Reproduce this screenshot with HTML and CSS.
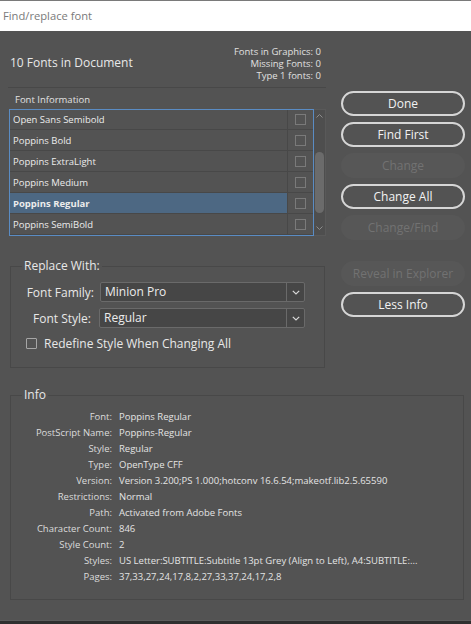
FILE: index.html
```html
<!DOCTYPE html>
<html>
<head>
<meta charset="utf-8">
<title>Find/replace font</title>
<link rel="stylesheet" href="styles.css">
</head>
<body>
<div class="titlebar">Find/replace font</div>
<div class="dialog">
  <div class="top">
    <div class="left">
      <div class="header">
        <div class="count">10 Fonts in Document</div>
        <div class="stats">
          <div>Fonts in Graphics: 0</div>
          <div>Missing Fonts: 0</div>
          <div>Type 1 fonts: 0</div>
        </div>
      </div>
      <div class="list-label">Font Information</div>
      <div class="list-wrap">
        <div class="list">
          <div class="row first"><span class="name">Open Sans Semibold</span><span class="chk"><span class="box"></span></span></div>
          <div class="row"><span class="name">Poppins Bold</span><span class="chk"><span class="box"></span></span></div>
          <div class="row"><span class="name">Poppins ExtraLight</span><span class="chk"><span class="box"></span></span></div>
          <div class="row"><span class="name">Poppins Medium</span><span class="chk"><span class="box"></span></span></div>
          <div class="row sel"><span class="name">Poppins Regular</span><span class="chk"><span class="box"></span></span></div>
          <div class="row"><span class="name">Poppins SemiBold</span><span class="chk"><span class="box"></span></span></div>
        </div>
        <div class="scroll">
          <div class="arrow up"><svg width="7" height="4" viewBox="0 0 7 4"><path d="M0.5 3.5 L3.5 0.5 L6.5 3.5" fill="none" stroke="#8c8c8c" stroke-width="1"/></svg></div>
          <div class="thumb"></div>
          <div class="track-rest"></div>
          <div class="arrow down"><svg width="7" height="4" viewBox="0 0 7 4"><path d="M0.5 0.5 L3.5 3.5 L6.5 0.5" fill="none" stroke="#8c8c8c" stroke-width="1"/></svg></div>
        </div>
      </div>
      <fieldset class="group replace">
        <legend>Replace With:</legend>
        <div class="field">
          <span class="field-label">Font Family:</span>
          <div class="select family"><span class="select-text">Minion Pro</span><span class="select-btn"><svg width="8" height="5" viewBox="0 0 8 5"><path d="M0.8 0.8 L4 4 L7.2 0.8" fill="none" stroke="#d8d8d8" stroke-width="1.2"/></svg></span></div>
        </div>
        <div class="field second">
          <span class="field-label style-label">Font Style:</span>
          <div class="select style"><span class="select-text">Regular</span><span class="select-btn"><svg width="8" height="5" viewBox="0 0 8 5"><path d="M0.8 0.8 L4 4 L7.2 0.8" fill="none" stroke="#d8d8d8" stroke-width="1.2"/></svg></span></div>
        </div>
        <div class="check-row"><span class="cbox"></span><span class="check-label">Redefine Style When Changing All</span></div>
      </fieldset>
    </div>
    <div class="buttons">
      <div class="btn">Done</div>
      <div class="btn">Find First</div>
      <div class="btn disabled">Change</div>
      <div class="btn">Change All</div>
      <div class="btn disabled">Change/Find</div>
      <div class="btn disabled spaced">Reveal in Explorer</div>
      <div class="btn">Less Info</div>
    </div>
  </div>
  <fieldset class="group info">
    <legend>Info</legend>
    <div class="info-grid">
      <span class="k">Font:</span><span class="v">Poppins Regular</span>
      <span class="k">PostScript Name:</span><span class="v">Poppins-Regular</span>
      <span class="k">Style:</span><span class="v">Regular</span>
      <span class="k">Type:</span><span class="v">OpenType CFF</span>
      <span class="k">Version:</span><span class="v">Version 3.200;PS 1.000;hotconv 16.6.54;makeotf.lib2.5.65590</span>
      <span class="k">Restrictions:</span><span class="v">Normal</span>
      <span class="k">Path:</span><span class="v">Activated from Adobe Fonts</span>
      <span class="k">Character Count:</span><span class="v">846</span>
      <span class="k">Style Count:</span><span class="v">2</span>
      <span class="k">Styles:</span><span class="v">US Letter:SUBTITLE:Subtitle 13pt Grey (Align to Left), A4:SUBTITLE:...</span>
      <span class="k">Pages:</span><span class="v">37,33,27,24,17,8,2,27,33,37,24,17,2,8</span>
    </div>
  </fieldset>
</div>
</body>
</html>
```
FILE: styles.css
```css
html, body {
  margin: 0;
  padding: 0;
}
body {
  width: 471px;
  height: 624px;
  overflow: hidden;
  background: #2f2f2f;
  font-family: "Open Sans", "Noto Sans", sans-serif;
  color: #e4e4e4;
}
.titlebar {
  box-sizing: border-box;
  height: 31px;
  border-top: 1px solid #7a7a7a;
  background: #ffffff;
  color: #7a7a7a;
  font-size: 11.2px;
  line-height: 29px;
  padding-left: 3px;
}
.dialog {
  height: 590px;
  background: #535353;
  border-bottom: 1px solid #5c5c5c;
  box-sizing: border-box;
}
.top {
  display: flex;
  padding-left: 9px;
}
.left {
  width: 317px;
}
.header {
  height: 56px;
  margin-left: -1px;
  display: flex;
  justify-content: space-between;
  border-bottom: 1px solid #484848;
}
.count {
  font-size: 12px;
  line-height: 16px;
  padding-top: 24px;
  padding-left: 2px;
  color: #e8e8e8;
}
.stats {
  padding-top: 15px;
  padding-right: 5px;
  text-align: right;
  font-size: 9.5px;
  line-height: 12px;
  color: #e0e0e0;
}
.list-label {
  box-sizing: border-box;
  height: 21px;
  line-height: 21px;
  padding-top: 1px;
  font-size: 9.5px;
  padding-left: 6px;
  color: #e2e2e2;
}
.list-wrap {
  display: flex;
  height: 127px;
}
.list {
  box-sizing: border-box;
  width: 305px;
  height: 127px;
  border: 1px solid #5a8cc4;
  overflow: hidden;
}
.row {
  display: flex;
  height: 20px;
  border-bottom: 1px solid #484848;
}
.row.first {
  height: 19px;
}
.name {
  box-sizing: border-box;
  flex: 1;
  padding-left: 3px;
  padding-top: 2px;
  font-size: 9.5px;
  line-height: 18px;
  color: #ececec;
}
.row.first .name {
  padding-top: 1px;
}
.row.sel .name {
  background: #4d6883;
  font-weight: 700;
}
.chk {
  box-sizing: border-box;
  width: 26px;
  border-left: 1px solid #484848;
  display: flex;
  align-items: center;
  justify-content: center;
}
.box {
  box-sizing: border-box;
  width: 11px;
  height: 11px;
  border: 1px solid #7a7a7a;
}
.scroll {
  box-sizing: border-box;
  width: 12px;
  height: 127px;
  background: #4e4e4e;
  border: 1px solid #595959;
  border-left: none;
  display: flex;
  flex-direction: column;
  align-items: center;
}
.arrow {
  height: 11px;
  display: flex;
  align-items: center;
  justify-content: center;
}
.arrow.down {
  height: 14px;
}
.thumb {
  margin-top: 31px;
  width: 9px;
  height: 61px;
  border-radius: 4.5px;
  background: #6b6b6b;
}
.track-rest {
  flex: 1;
}
fieldset.group {
  margin: 0;
  min-width: 0;
  border: 1px solid #484848;
}
fieldset.group legend {
  padding: 0 2px;
  font-size: 12px;
  line-height: 16px;
  color: #e8e8e8;
}
.replace {
  box-sizing: border-box;
  width: 315px;
  margin: 22px 0 0 1px !important;
  padding: 8px 0 18px 11px;
}
.field {
  display: flex;
  align-items: center;
  height: 20px;
}
.field.second {
  margin-top: 6px;
}
.field-label {
  box-sizing: border-box;
  width: 78px;
  padding-right: 6px;
  text-align: right;
  font-size: 12px;
  color: #e8e8e8;
}
.field-label.style-label {
  width: 77px;
  padding-right: 8px;
}
.select {
  box-sizing: border-box;
  height: 20px;
  display: flex;
  background: #464646;
  border: 1px solid #6a6a6a;
  border-radius: 2px;
}
.select.family {
  width: 205px;
}
.select.style {
  width: 206px;
}
.select-text {
  flex: 1;
  padding-left: 4px;
  font-size: 12px;
  line-height: 18px;
  color: #ececec;
}
.select-btn {
  width: 17px;
  border-left: 1px solid #6a6a6a;
  display: flex;
  align-items: center;
  justify-content: center;
}
.check-row {
  display: flex;
  align-items: center;
  height: 11px;
  margin-top: 10px;
  padding-left: 4px;
}
.cbox {
  box-sizing: border-box;
  width: 11px;
  height: 11px;
  border: 1px solid #a6a6a6;
  border-radius: 1px;
}
.check-label {
  margin-left: 7px;
  font-size: 12px;
  line-height: 16px;
  color: #e8e8e8;
}
.buttons {
  margin-left: 15px;
  width: 124px;
  padding-top: 60px;
  display: flex;
  flex-direction: column;
  gap: 6px;
}
.btn {
  box-sizing: border-box;
  height: 25px;
  border: 2px solid #d6d6d6;
  border-radius: 13px;
  text-align: center;
  font-size: 12px;
  line-height: 21px;
  color: #f2f2f2;
}
.btn.disabled {
  border-color: transparent;
  background: #575757;
  color: #727272;
}
.btn.spaced {
  margin-top: 15px;
}
.info {
  box-sizing: border-box;
  width: 454px;
  margin: 19px 0 0 10px !important;
  padding: 6px 0 14px 11px;
}
.info-grid {
  display: grid;
  grid-template-columns: 90px 1fr;
  column-gap: 7px;
  font-size: 9.5px;
  line-height: 16px;
}
.info-grid .k {
  text-align: right;
  color: #dcdcdc;
}
.info-grid .v {
  color: #e4e4e4;
  white-space: nowrap;
}
```
